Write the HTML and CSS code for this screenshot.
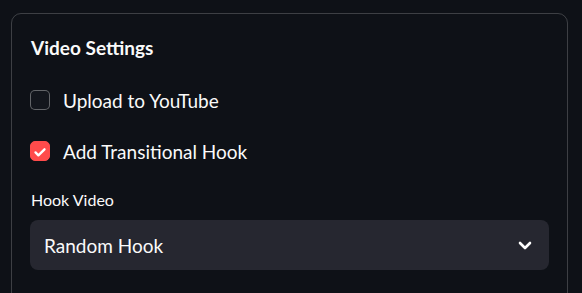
FILE: index.html
```html
<!DOCTYPE html>
<html lang="en">
<head>
  <meta charset="UTF-8" />
  <title>Video Settings</title>
  <link rel="stylesheet" href="styles.css">
</head>
<body>
  <div class="panel">
    <h3>Video Settings</h3>

    <label class="check">
      <span class="box"></span>
      <span>Upload to YouTube</span>
    </label>

    <label class="check">
      <span class="box checked">
        <svg viewBox="0 0 20 20" width="20" height="20">
          <path d="M5 10.5l3.2 3.2L15 7" fill="none" stroke="#fff" stroke-width="2.6" stroke-linecap="round" stroke-linejoin="round"/>
        </svg>
      </span>
      <span>Add Transitional Hook</span>
    </label>

    <div class="field">
      <div class="field-label">Hook Video</div>
      <div class="select">
        <span>Random Hook</span>
        <svg viewBox="0 0 14 9" width="14" height="9">
          <path d="M2 2l5 5 5-5" fill="none" stroke="#fff" stroke-width="2.6" stroke-linecap="round" stroke-linejoin="round"/>
        </svg>
      </div>
    </div>
  </div>
</body>
</html>
```

FILE: styles.css
```css
* {
  box-sizing: border-box;
}

html {
  overflow: hidden;
}

body {
  margin: 0;
  background: #0e1117;
  color: #fafafa;
  font-family: 'Source Sans Pro', Lato, sans-serif;
  font-size: 19px;
  padding: 13px 14px 0 11px;
  height: 293px;
  overflow: hidden;
}

.panel {
  border: 1px solid rgba(250, 250, 250, 0.2);
  border-radius: 10px;
  padding: 19px 18px 0 18px;
  height: 300px;
}

h3 {
  margin: 0 0 22px 1px;
  font-size: 19px;
  font-weight: 700;
  line-height: 30px;
}

.check {
  display: flex;
  align-items: center;
  gap: 13px;
  height: 30px;
  margin-bottom: 21px;
}

.box {
  width: 20px;
  height: 20px;
  border-radius: 5px;
  border: 1px solid rgba(250, 250, 250, 0.35);
  background: #13161d;
  display: flex;
}

.box.checked {
  background: #ff4b4b;
  border-color: #ff4b4b;
}

.field {
  padding-top: 2px;
  padding-left: 1px;
}

.field-label {
  font-size: 16px;
  line-height: 22px;
  margin-bottom: 9px;
}

.select {
  height: 50px;
  margin-left: -1px;
  background: #262730;
  border-radius: 8px;
  display: flex;
  align-items: center;
  justify-content: space-between;
  padding: 0 17px 0 14px;
}
```
